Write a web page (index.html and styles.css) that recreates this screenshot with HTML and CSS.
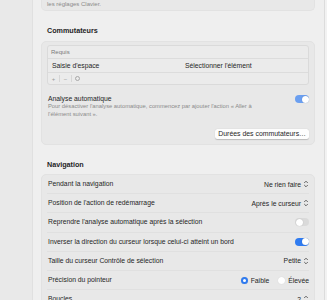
FILE: index.html
```html
<!DOCTYPE html>
<html lang="fr">
<head>
    <meta charset="UTF-8">
    <title>Contrôle de sélection</title>
    <link rel="stylesheet" href="styles.css">
</head>
<body>
    <div class="sidebar"></div>
    <main class="content">
        <div class="card card-top">
            <p class="note">les réglages Clavier.</p>
        </div>

        <h2 class="section-title">Commutateurs</h2>
        <div class="card">
            <div class="table">
                <div class="table-head">Requis</div>
                <div class="table-row">
                    <span class="col-a">Saisie d'espace</span>
                    <span class="col-b">Sélectionner l'élément</span>
                </div>
                <div class="table-foot">
                    <span class="tool">+</span>
                    <span class="sep"></span>
                    <span class="tool">−</span>
                    <span class="sep"></span>
                    <span class="tool circle"></span>
                </div>
            </div>

            <div class="auto-row">
                <div>
                    <div class="label">Analyse automatique</div>
                    <p class="note">Pour désactiver l'analyse automatique, commencez par ajouter l'action « Aller à l'élément suivant ».</p>
                </div>
                <span class="switch on dim"></span>
            </div>

            <div class="btn-row">
                <button class="btn">Durées des commutateurs…</button>
            </div>
        </div>

        <h2 class="section-title nav-title">Navigation</h2>
        <div class="card rows">
            <div class="row">
                <span class="label">Pendant la navigation</span>
                <span class="select">Ne rien faire <svg class="updown" viewBox="0 0 6 8"><path d="M1.2 3 L3 1.2 L4.8 3 M1.2 5 L3 6.8 L4.8 5"/></svg></span>
            </div>
            <div class="row">
                <span class="label">Position de l'action de redémarrage</span>
                <span class="select">Après le curseur <svg class="updown" viewBox="0 0 6 8"><path d="M1.2 3 L3 1.2 L4.8 3 M1.2 5 L3 6.8 L4.8 5"/></svg></span>
            </div>
            <div class="row">
                <span class="label">Reprendre l'analyse automatique après la sélection</span>
                <span class="switch"></span>
            </div>
            <div class="row">
                <span class="label">Inverser la direction du curseur lorsque celui-ci atteint un bord</span>
                <span class="switch on"></span>
            </div>
            <div class="row">
                <span class="label">Taille du curseur Contrôle de sélection</span>
                <span class="select">Petite <svg class="updown" viewBox="0 0 6 8"><path d="M1.2 3 L3 1.2 L4.8 3 M1.2 5 L3 6.8 L4.8 5"/></svg></span>
            </div>
            <div class="row">
                <span class="label">Précision du pointeur</span>
                <span class="radios">
                    <span class="radio checked"></span><span class="radio-text">Faible</span>
                    <span class="radio"></span><span class="radio-text">Élevée</span>
                </span>
            </div>
            <div class="row">
                <span class="label">Boucles</span>
                <span class="select">2 <svg class="updown" viewBox="0 0 6 8"><path d="M1.2 3 L3 1.2 L4.8 3 M1.2 5 L3 6.8 L4.8 5"/></svg></span>
            </div>
        </div>
    </main>
    <div class="scroll-edge"></div>
</body>
</html>
```

FILE: styles.css
```css
body {
    margin: 0;
    height: 300px;
    overflow: hidden;
    display: flex;
    background: #ececec;
    font-family: "Liberation Sans", Arial, sans-serif;
    color: #262626;
}

.sidebar {
    width: 32px;
    flex: none;
    background: #e9e9e9;
    border-right: 1px solid #e0e0e0;
}

.content {
    flex: 1;
    padding: 0 9px 0 8px;
    background: #efefef;
}

.scroll-edge {
    width: 2px;
    flex: none;
    background: #f2f2f2;
    border-left: 1px solid #dcdcdc;
}

.card {
    background: #e8e8e8;
    border: 1px solid #e2e2e2;
    border-radius: 5px;
    padding: 3px 5px 5px;
}

.card-top {
    border-top: none;
    border-radius: 0 0 5px 5px;
    padding: 0 5px 2px;
}

.note {
    margin: 0;
    font-size: 6px;
    line-height: 8px;
    color: #8a8a8a;
}

.section-title {
    margin: 15px 0 5px 6px;
    font-size: 7.2px;
    line-height: 10px;
    font-weight: bold;
    color: #1f1f1f;
}

.nav-title {
    margin-top: 15px;
    margin-bottom: 4px;
}

.table {
    border: 1px solid #dadada;
    border-radius: 3px;
    background: #ebebeb;
}

.table-head {
    font-size: 6px;
    line-height: 12px;
    padding-left: 3px;
    color: #7a7a7a;
    border-bottom: 1px solid #dcdcdc;
}

.table-row {
    display: grid;
    grid-template-columns: 133px 1fr;
    font-size: 6.8px;
    line-height: 13px;
    padding-left: 4px;
    border-bottom: 1px solid #dcdcdc;
}

.table-foot {
    display: flex;
    align-items: center;
    gap: 3px;
    height: 11px;
    padding-left: 3px;
    color: #9a9a9a;
    font-size: 6px;
}

.tool {
    width: 5px;
    text-align: center;
}

.tool.circle {
    width: 3px;
    height: 3px;
    border: 0.8px solid #a8a8a8;
    border-radius: 50%;
}

.sep {
    width: 1px;
    height: 7px;
    background: #d6d6d6;
}

.auto-row {
    display: flex;
    justify-content: space-between;
    align-items: flex-start;
    margin-top: 10px;
    padding-left: 1px;
}

.auto-row .note {
    width: 222px;
    font-size: 5.8px;
    line-height: 7.5px;
}

.label {
    font-size: 6.8px;
    line-height: 8px;
    color: #262626;
}

.switch {
    flex: none;
    width: 14px;
    height: 8px;
    border-radius: 4px;
    background: #dadada;
    position: relative;
}

.switch::after {
    content: "";
    position: absolute;
    top: 0.5px;
    left: 0.5px;
    width: 7px;
    height: 7px;
    border-radius: 50%;
    background: #fff;
    box-shadow: 0 0 1px rgba(0, 0, 0, 0.25);
}

.switch.on {
    background: #2f7bf0;
}

.switch.on.dim {
    background: #6b9ff0;
}

.switch.on::after {
    left: 6.5px;
}

.btn-row {
    display: flex;
    justify-content: flex-end;
    margin-top: 11px;
}

.btn {
    font-family: inherit;
    font-size: 6.9px;
    line-height: 10px;
    padding: 0 3px;
    height: 10px;
    background: #fdfdfd;
    color: #262626;
    border: none;
    border-radius: 2.5px;
    box-shadow: 0 0.5px 1px rgba(0, 0, 0, 0.2);
}

.rows {
    padding: 0 5px;
}

.row {
    display: flex;
    justify-content: space-between;
    align-items: center;
    height: 19.2px;
    padding-left: 1px;
    border-bottom: 1px solid #e0e0e0;
    box-sizing: border-box;
}

.select {
    display: flex;
    align-items: center;
    gap: 2px;
    font-size: 6.8px;
    color: #262626;
}

.updown {
    width: 6px;
    height: 8px;
    fill: none;
    stroke: #555;
    stroke-width: 0.9;
}

.radios {
    display: flex;
    align-items: center;
    gap: 3px;
    font-size: 6.8px;
}

.radio {
    width: 7px;
    height: 7px;
    border-radius: 50%;
    background: #fff;
    box-sizing: border-box;
    box-shadow: 0 0 1px rgba(0, 0, 0, 0.15);
}

.radio.checked {
    border: 2.2px solid #2f7bf0;
}

.radio-text {
    margin-right: 6px;
}

.radio-text:last-child {
    margin-right: 0;
}
```
